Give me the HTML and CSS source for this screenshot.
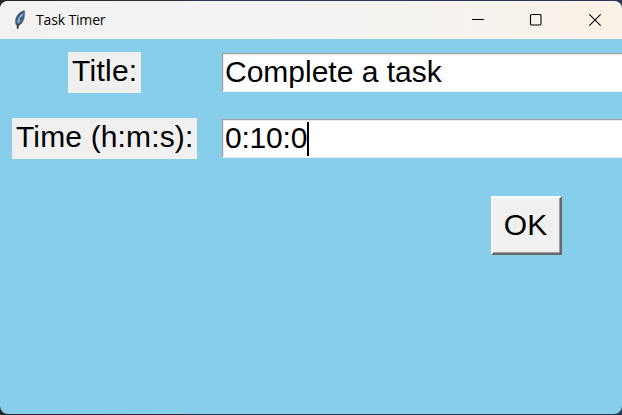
FILE: index.html
```html
<!DOCTYPE html>
<html lang="en">
<head>
<meta charset="utf-8">
<title>Task Timer</title>
<link rel="stylesheet" href="styles.css">
</head>
<body>
<main class="window">
  <header class="titlebar">
    <svg class="feather" viewBox="0 0 12 20" width="12" height="20">
      <path d="M10.500 .6C6.500 1.200 3 4.500 1.600 9C.9 11.500 1.300 14 2.600 15.300L3.200 18.800L4.400 18.800L4.700 15.500C7.800 14.200 9.900 10.500 10.500 6.500C10.800 4.500 11 2.300 10.500 .6Z" fill="#4a4d52" stroke="#8c8c8c" stroke-width=".6"/>
      <path d="M9.600 2.200C6 4 3.300 8.300 2.600 12.800L4.300 14L5.800 13C8.700 9.800 9.700 6 9.600 2.200Z" fill="#4588d6"/>
      <path d="M8.300 4.200C6.100 6.500 4.500 9.500 4 12.300" fill="none" stroke="#8dbcf0" stroke-width="1.300"/>
      <path d="M7.800 6.800L6.300 9.200L7.500 9.300M4.300 14L3.700 18.500" fill="none" stroke="#17253b" stroke-width=".9"/>
    </svg>
    <h1 class="caption">Task Timer</h1>
    <div class="controls">
      <svg viewBox="0 0 14 14" width="14" height="14"><path d="M2 6.500H14" stroke="#000" stroke-width="1"/></svg>
      <svg viewBox="0 0 14 14" width="14" height="14"><rect x="1.500" y="1.500" width="10.500" height="10.500" rx="1.200" fill="none" stroke="#000" stroke-width="1.100"/></svg>
      <svg viewBox="0 0 14 14" width="14" height="14"><path d="M1.300 1.300L12.700 12.700M12.700 1.300L1.300 12.700" stroke="#000" stroke-width="1.100"/></svg>
    </div>
  </header>
  <section class="form">
    <div class="label"><span class="label-title">Title:</span></div>
    <div class="entry"><span class="value-title">Complete a task</span></div>
    <div class="label"><span class="label-time">Time (h:m:s):</span></div>
    <div class="entry"><span class="value-time">0:10:0</span><i class="caret"></i></div>
    <button class="ok" type="button">OK</button>
  </section>
</main>
</body>
</html>
```
FILE: styles.css
```css
* { box-sizing: border-box; }
body {
  margin: 0;
  height: 415px;
  padding: 1px 0;
  overflow: hidden;
  background: linear-gradient(90deg, #292629 0, #302d32 180px, #2c3654 200px, #2b3857 622px);
}
.window {
  height: 413px;
  overflow: hidden;
  border-radius: 8px;
  background: #87ceeb;
}
.titlebar {
  display: flex;
  align-items: center;
  height: 38px;
  padding: 0 20px 0 14px;
  background: linear-gradient(90deg, #f2f2f2 0, #f3f3f3 260px, #f5f3ef 420px, #faf1e9 580px);
}
.feather { flex: none; margin-top: -1px; }
.caption {
  margin: 0 0 0 10px;
  font: 400 14px/20px "Open Sans", "Noto Sans", sans-serif;
  letter-spacing: -0.150px;
  color: #000;
}
.controls {
  display: flex;
  gap: 45px;
  margin-left: auto;
}
.form {
  display: grid;
  grid-template-columns: 185px 420px;
  grid-template-rows: 41px 41px 59px;
  column-gap: 25px;
  row-gap: 25px;
  padding: 13px 0 0 12px;
  font: 30px/37px "Liberation Sans", Arial, sans-serif;
  color: #000;
}
.label { display: flex; justify-content: center; }
.label span {
  height: 41px;
  padding: 0 3px;
  white-space: nowrap;
  background: #f0f0f0;
}
.label .label-title { width: 73px; padding-left: 4px; letter-spacing: 0.250px; }
.label .label-time { width: 185px; padding-left: 4px; letter-spacing: 0.150px; }
.entry {
  display: flex;
  align-items: center;
  align-self: center;
  height: 39px;
  padding-left: 2px;
  white-space: nowrap;
  background: #fff;
  border: 1px solid;
  border-color: #a0a0a0 #fff #e3f2f8 #a0a0a0;
  box-shadow: inset 1px 1px #e8e8e8;
}
.entry span { margin-top: -3px; }
.value-title { letter-spacing: 0; }
.value-time { letter-spacing: -0.200px; }
.caret { width: 2px; height: 34px; background: #000; }
.ok {
  grid-column: 2;
  width: 71px;
  height: 59px;
  margin: 12px 0 0 269px;
  padding: 0 2px 2px 0;
  font: inherit;
  color: #000;
  background: #f0f0f0;
  border: 2px solid;
  border-color: #fff #696969 #696969 #fff;
  border-radius: 0;
  box-shadow: inset -1px -1px #a0a0a0;
}
```
